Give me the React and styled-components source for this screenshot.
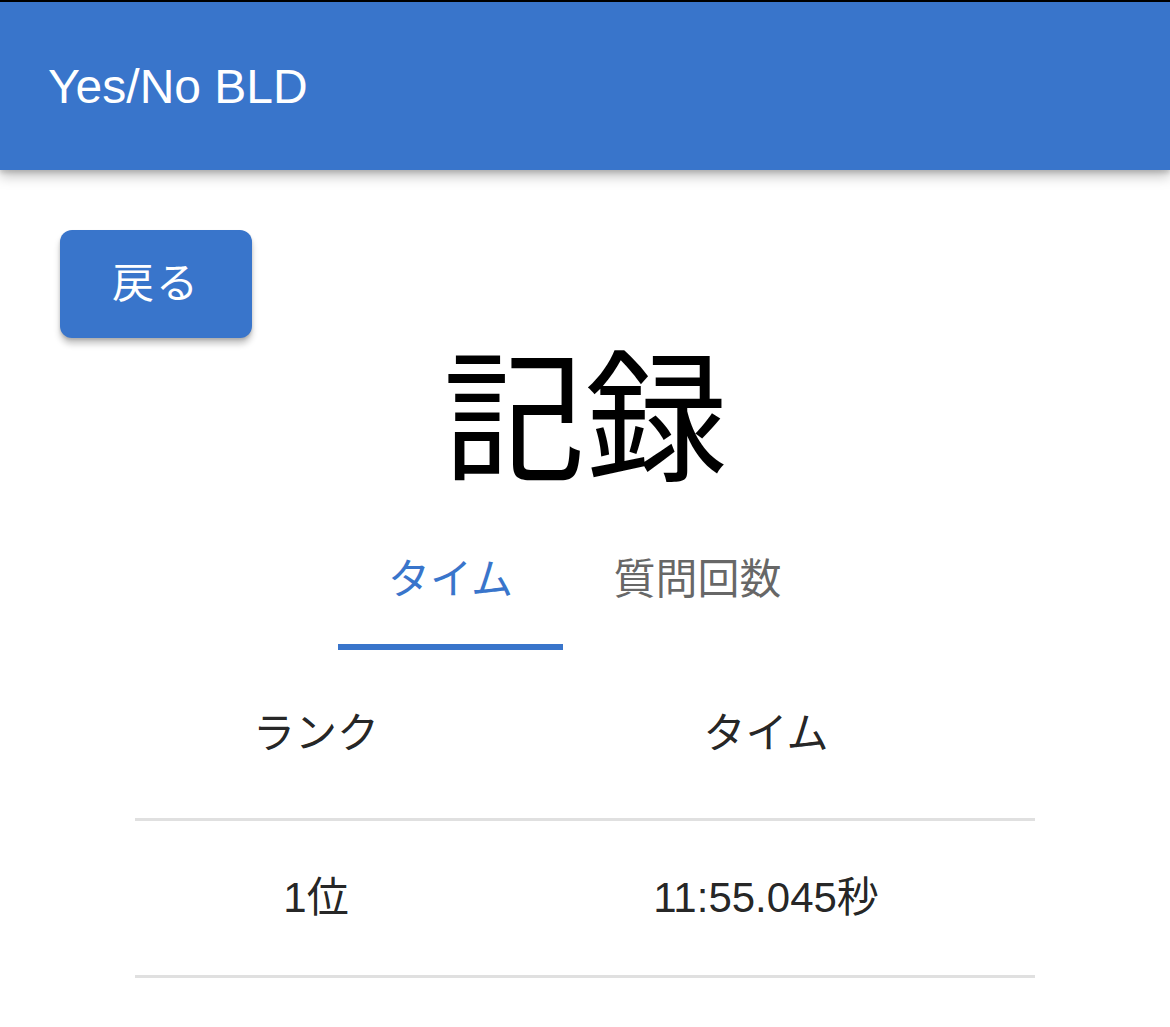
import React, { useState } from 'react';
import styled, { createGlobalStyle } from 'styled-components';

const GlobalStyle = createGlobalStyle`
  html, body {
    margin: 0;
    padding: 0;
    background: #ffffff;
  }
  body {
    font-family: "Liberation Sans", "Noto Sans CJK JP", sans-serif;
  }
`;

const BLUE = '#3975cb';

const records = [{ rank: '1位', time: '11:55.045秒' }];

const App = () => {
  const [tab, setTab] = useState(0);

  return (
    <Page>
      <GlobalStyle />
      <AppBar>
        <Brand>Yes/No BLD</Brand>
      </AppBar>
      <Main>
        <BackRow>
          <BackButton>戻る</BackButton>
        </BackRow>
        <Title>記録</Title>
        <Tabs>
          <Tab active={tab === 0} width={225} onClick={() => setTab(0)}>
            タイム
          </Tab>
          <Tab active={tab === 1} width={269} onClick={() => setTab(1)}>
            質問回数
          </Tab>
        </Tabs>
        <Table>
          <thead>
            <tr>
              <HeadCell>ランク</HeadCell>
              <HeadCell>タイム</HeadCell>
            </tr>
          </thead>
          <tbody>
            {records.map((r) => (
              <tr key={r.rank}>
                <BodyCell>{r.rank}</BodyCell>
                <BodyCell>{r.time}</BodyCell>
              </tr>
            ))}
          </tbody>
        </Table>
      </Main>
    </Page>
  );
};

export default App;

const Page = styled.div`
  width: 1170px;
  min-height: 1027px;
  background: #fff;
  overflow: hidden;
`;

const AppBar = styled.header`
  height: 168px;
  border-top: 2px solid #000;
  background: ${BLUE};
  display: flex;
  align-items: center;
  padding-left: 48px;
  box-shadow: 0 6px 12px rgba(0, 0, 0, 0.25), 0 3px 4px rgba(0, 0, 0, 0.12);
  position: relative;
  z-index: 1;
`;

const Brand = styled.h1`
  margin: 0;
  font-family: "Liberation Sans", sans-serif;
  font-weight: 400;
  font-size: 48px;
  color: #fff;
`;

const Main = styled.main`
  display: flex;
  flex-direction: column;
  align-items: center;
`;

const BackRow = styled.div`
  align-self: stretch;
  padding: 60px 0 0 60px;
`;

const BackButton = styled.button`
  width: 192px;
  height: 108px;
  border: none;
  border-radius: 12px;
  padding: 0 0 10px;
  background: ${BLUE};
  color: #fff;
  font-family: "Noto Sans CJK JP", sans-serif;
  font-size: 42px;
  letter-spacing: 2px;
  box-shadow: 0 6px 6px rgba(0, 0, 0, 0.22), 0 2px 3px rgba(0, 0, 0, 0.14);
  cursor: pointer;
`;

const Title = styled.h2`
  margin: 0;
  height: 168px;
  font-family: "Noto Sans CJK JP", sans-serif;
  font-weight: 400;
  font-size: 142px;
  line-height: 140px;
  color: #000;
`;

const Tabs = styled.nav`
  display: flex;
`;

const Tab = styled.button`
  width: ${(p) => p.width}px;
  height: 144px;
  border: none;
  background: none;
  padding: 0;
  font-family: "Noto Sans CJK JP", sans-serif;
  font-size: 42px;
  color: ${(p) => (p.active ? BLUE : 'rgba(0, 0, 0, 0.6)')};
  border-bottom: 6px solid ${(p) => (p.active ? BLUE : 'transparent')};
  cursor: pointer;
`;

const Table = styled.table`
  width: 900px;
  border-collapse: collapse;
`;

const Cell = styled.td`
  width: 50%;
  text-align: center;
  padding: 0 88px 10px 0;
  font-family: "Liberation Sans", "Noto Sans CJK JP", sans-serif;
  font-size: 42px;
  font-weight: 400;
  color: rgba(0, 0, 0, 0.87);
  border-bottom: 3px solid #e0e0e0;
`;

const HeadCell = styled(Cell).attrs({ as: 'th' })`
  height: 158px;
`;

const BodyCell = styled(Cell)`
  height: 144px;
`;
